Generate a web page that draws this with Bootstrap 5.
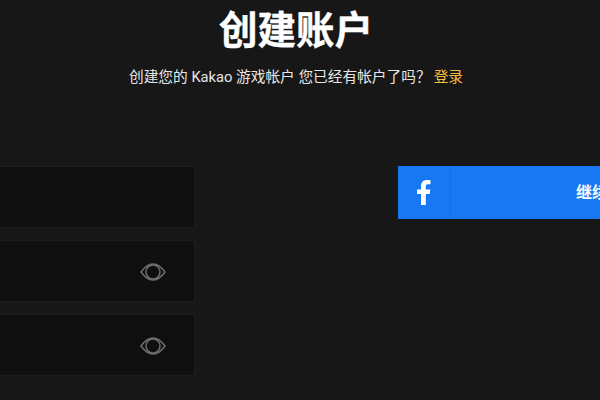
<!DOCTYPE html>
<html lang="zh">
<head>
<meta charset="utf-8">
<link rel="stylesheet" href="https://cdn.jsdelivr.net/npm/bootstrap@5.3.0/dist/css/bootstrap.min.css">
<style>
html,body{height:100%;}
body{background:#171717;color:#e6e6e6;font-family:"Liberation Sans","Noto Sans CJK SC",sans-serif;overflow:hidden;width:600px;height:400px;}
.sheet{width:1004px;margin-left:-206px;}
.head-title{font-size:38.500px;line-height:46px;font-weight:700;color:#fff;margin:8px 0 0;-webkit-text-stroke:.4px #fff;}
.head-sub{font-size:14.700px;line-height:20px;margin:13px 0 0;font-family:Roboto,"Noto Sans CJK SC",sans-serif;}
.head-sub a{color:#f7bc3c;text-decoration:none;margin-left:3px;}
.forms{margin-top:79px;gap:204px;}
.left-col{width:401px;gap:12px;}
.field{height:62px;background:#0f0f0f;border:1px solid #1d1d1d;padding:2px 28px 0 0;}
.fb-btn{width:446px;height:53px;background:#1877f2;color:#fff;font-weight:700;font-size:16px;margin-left:-1px;}
.fb-ico{width:53px;border-right:1px solid #166fe0;}
</style>
</head>
<body>
<div class="sheet">
  <div class="text-center">
    <h1 class="head-title">创建账户</h1>
    <p class="head-sub">创建您的 Kakao 游戏帐户 您已经有帐户了吗？<a href="#">登录</a></p>
  </div>
  <div class="forms d-flex">
    <div class="left-col flex-shrink-0 d-flex flex-column">
      <div class="field"></div>
      <div class="field d-flex align-items-center justify-content-end">
        <svg width="26" height="18" viewBox="0 0 26 18" fill="none" stroke="#6e6e6e" stroke-width="1.500"><path d="M1 9C5 3.500 9 1 13 1S21 3.500 25 9C21 14.500 17 17 13 17S5 14.500 1 9Z"/><circle cx="13" cy="9" r="7"/></svg>
      </div>
      <div class="field d-flex align-items-center justify-content-end">
        <svg width="26" height="18" viewBox="0 0 26 18" fill="none" stroke="#6e6e6e" stroke-width="1.500"><path d="M1 9C5 3.500 9 1 13 1S21 3.500 25 9C21 14.500 17 17 13 17S5 14.500 1 9Z"/><circle cx="13" cy="9" r="7"/></svg>
      </div>
    </div>
    <div class="flex-shrink-0">
      <div class="fb-btn d-flex">
        <div class="fb-ico d-flex align-items-center justify-content-center">
          <svg width="14" height="25" viewBox="0 0 14 25" fill="#fff"><path d="M4 25V14H0V9.500H4V6C4 2 6.500 0 10 0C11.700 0 13 .1 13.500 .2V4.300H11C9.300 4.300 8.800 5.100 8.800 6.500V9.500H13.300L12.700 14H8.800V25Z"/></svg>
        </div>
        <div class="flex-grow-1 d-flex align-items-center justify-content-center">继续使用 Facebook</div>
      </div>
    </div>
  </div>
</div>
<script src="https://cdn.jsdelivr.net/npm/bootstrap@5.3.0/dist/js/bootstrap.bundle.min.js"></script>
</body>
</html>
